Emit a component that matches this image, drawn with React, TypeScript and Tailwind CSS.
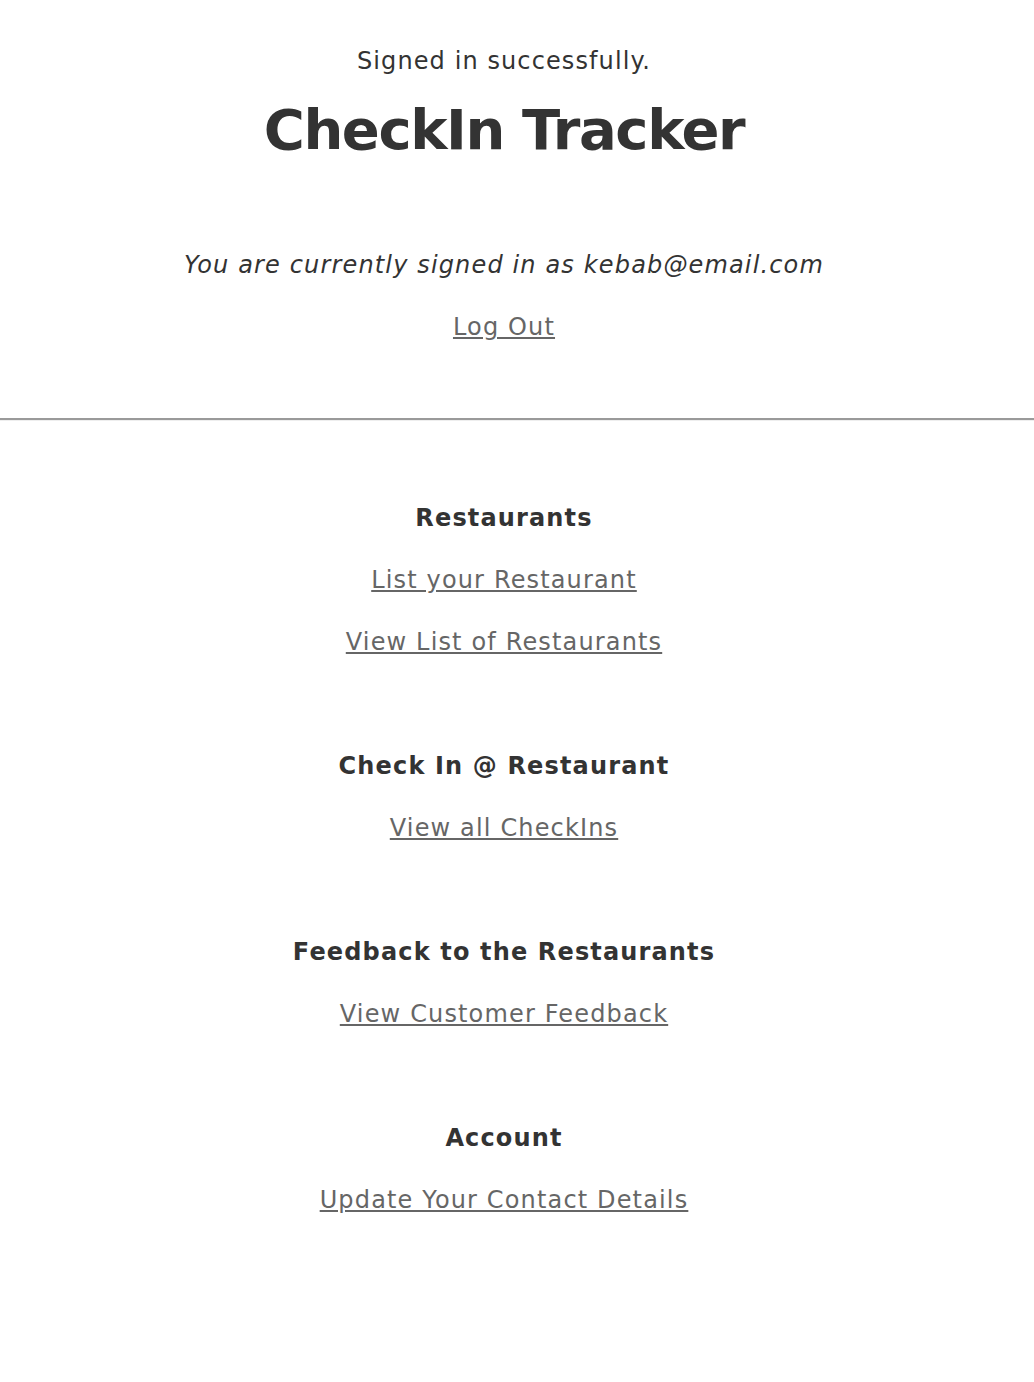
import React from "react";

const font = { fontFamily: '"DejaVu Sans", Verdana, sans-serif' };

function Line({ children, className = "" }: { children: React.ReactNode; className?: string }) {
  return <div className={`h-[62px] flex items-center justify-center ${className}`}>{children}</div>;
}

function L({ children }: { children: React.ReactNode }) {
  return (
    <Line>
      <a href="#" className="text-[#666] underline text-[24px] tracking-[1.15px]">{children}</a>
    </Line>
  );
}

function H({ children }: { children: React.ReactNode }) {
  return (
    <Line>
      <span className="font-bold text-[24px] text-[#333] tracking-[1.15px]">{children}</span>
    </Line>
  );
}

export default function App() {
  return (
    <div className="bg-white text-[#333] w-full min-h-[1382px]" style={font}>
      <div className="flex flex-col items-center pr-[26px]">
        <div className="h-[30px]" />
        <Line className="text-[24px] tracking-[1.1px]">Signed in successfully.</Line>
        <div className="h-[76px] flex items-center justify-center">
          <h1 className="text-[56px] font-bold leading-none tracking-[-1.4px]">CheckIn Tracker</h1>
        </div>
        <div className="h-[66px]" />
        <Line className="text-[24px] italic tracking-[1.15px]">You are currently signed in as kebab@email.com</Line>
        <L>Log Out</L>
      </div>
      <div className="h-[60px]" />
      <hr className="border-0 border-t-[2px] border-t-[#9a9a9a] border-b border-b-[#eee]" />
      <div className="h-[66px]" />
      <div className="flex flex-col items-center pr-[26px]">
        <H>Restaurants</H>
        <L>List your Restaurant</L>
        <L>View List of Restaurants</L>
        <div className="h-[62px]" />
        <H>Check In @ Restaurant</H>
        <L>View all CheckIns</L>
        <div className="h-[62px]" />
        <H>Feedback to the Restaurants</H>
        <L>View Customer Feedback</L>
        <div className="h-[62px]" />
        <H>Account</H>
        <L>Update Your Contact Details</L>
      </div>
    </div>
  );
}
